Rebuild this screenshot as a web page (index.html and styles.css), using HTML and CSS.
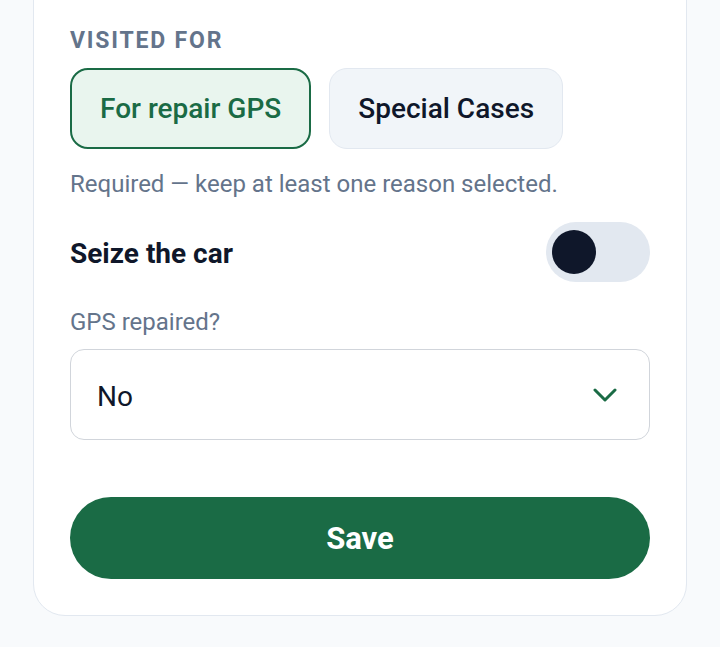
FILE: index.html
```html
<!doctype html>
<html lang="en">
<head>
  <meta charset="UTF-8">
  <meta name="viewport" content="width=device-width, initial-scale=1.0">

  <title>Visit report</title>

  <link rel="stylesheet" href="styles.css">
</head>

<body>
  <main class="card">
    <div class="section-label">Visited for</div>

    <div class="chips">
      <button class="chip chip-active" type="button">For repair GPS</button>
      <button class="chip" type="button">Special Cases</button>
    </div>

    <p class="hint">Required — keep at least one reason selected.</p>

    <div class="switch-row">
      <span class="switch-label">Seize the car</span>
      <span class="switch"><span class="switch-knob"></span></span>
    </div>

    <label class="field-label" for="gps">GPS repaired?</label>
    <div class="select" id="gps">
      <span>No</span>
      <svg class="chevron" width="24" height="14" viewBox="0 0 24 14" fill="none">
        <path d="M2 2l10 10L22 2" stroke="#1a6b45" stroke-width="3" stroke-linecap="round" stroke-linejoin="round"/>
      </svg>
    </div>

    <button class="save" type="button">Save</button>
  </main>
</body>
</html>
```

FILE: styles.css
```css
*{
  box-sizing: border-box;
}

html{
  height: 100%;
}

body{
  margin: 0;
  padding: 0 33px;
  min-height: 100%;
  color: #0f172a;
  font-family: Roboto, "Liberation Sans", Arial, sans-serif;
  background-color: #f8fafc;
}

.card{
  display: flex;
  margin-top: -40px;
  padding: 67px 36px 36px;
  background: #fff;
  border: 1px solid #e2e8f0;
  border-radius: 32px;
  flex-direction: column;
}

.section-label{
  color: #64748b;
  font-size: 23px;
  font-weight: 700;
  line-height: 26px;
  letter-spacing: 1.8px;
  text-transform: uppercase;
}

.chips{
  display: flex;
  margin-top: 14px;
  gap: 18px;
}

.chip{
  height: 81px;
  padding: 0 28px;
  color: #0f172a;
  font-family: inherit;
  font-size: 28px;
  font-weight: 500;
  background: #f1f5f9;
  border: 1px solid #e2e8f0;
  border-radius: 18px;
}

.chip-active{
  color: #1a6b45;
  background: #e9f5ee;
  border: 2px solid #1a6b45;
}

.hint{
  margin: 20px 0 0;
  color: #64748b;
  font-size: 24px;
  line-height: 30px;
}

.switch-row{
  display: flex;
  margin-top: 23px;
  align-items: center;
  justify-content: space-between;
}

.switch-label{
  padding-top: 2px;
  font-size: 28px;
  font-weight: 700;
}

.switch{
  display: flex;
  width: 104px;
  height: 60px;
  padding: 0 6px;
  background: #e2e8f0;
  border-radius: 30px;
  align-items: center;
}

.switch-knob{
  width: 44px;
  height: 44px;
  background: #0f172a;
  border-radius: 50%;
}

.field-label{
  margin-top: 25px;
  color: #64748b;
  font-size: 24px;
  line-height: 30px;
}

.select{
  display: flex;
  height: 91px;
  margin-top: 12px;
  padding: 3px 32px 0 26px;
  font-size: 28px;
  background: #fff;
  border: 1px solid #d1d5db;
  border-radius: 14px;
  align-items: center;
  justify-content: space-between;
}

.chevron{
  margin-top: -2px;
}

.save{
  height: 82px;
  margin-top: 57px;
  padding-top: 2px;
  color: #fff;
  font-family: inherit;
  font-size: 31px;
  font-weight: 700;
  background: #1a6b45;
  border: none;
  border-radius: 41px;
}
```
